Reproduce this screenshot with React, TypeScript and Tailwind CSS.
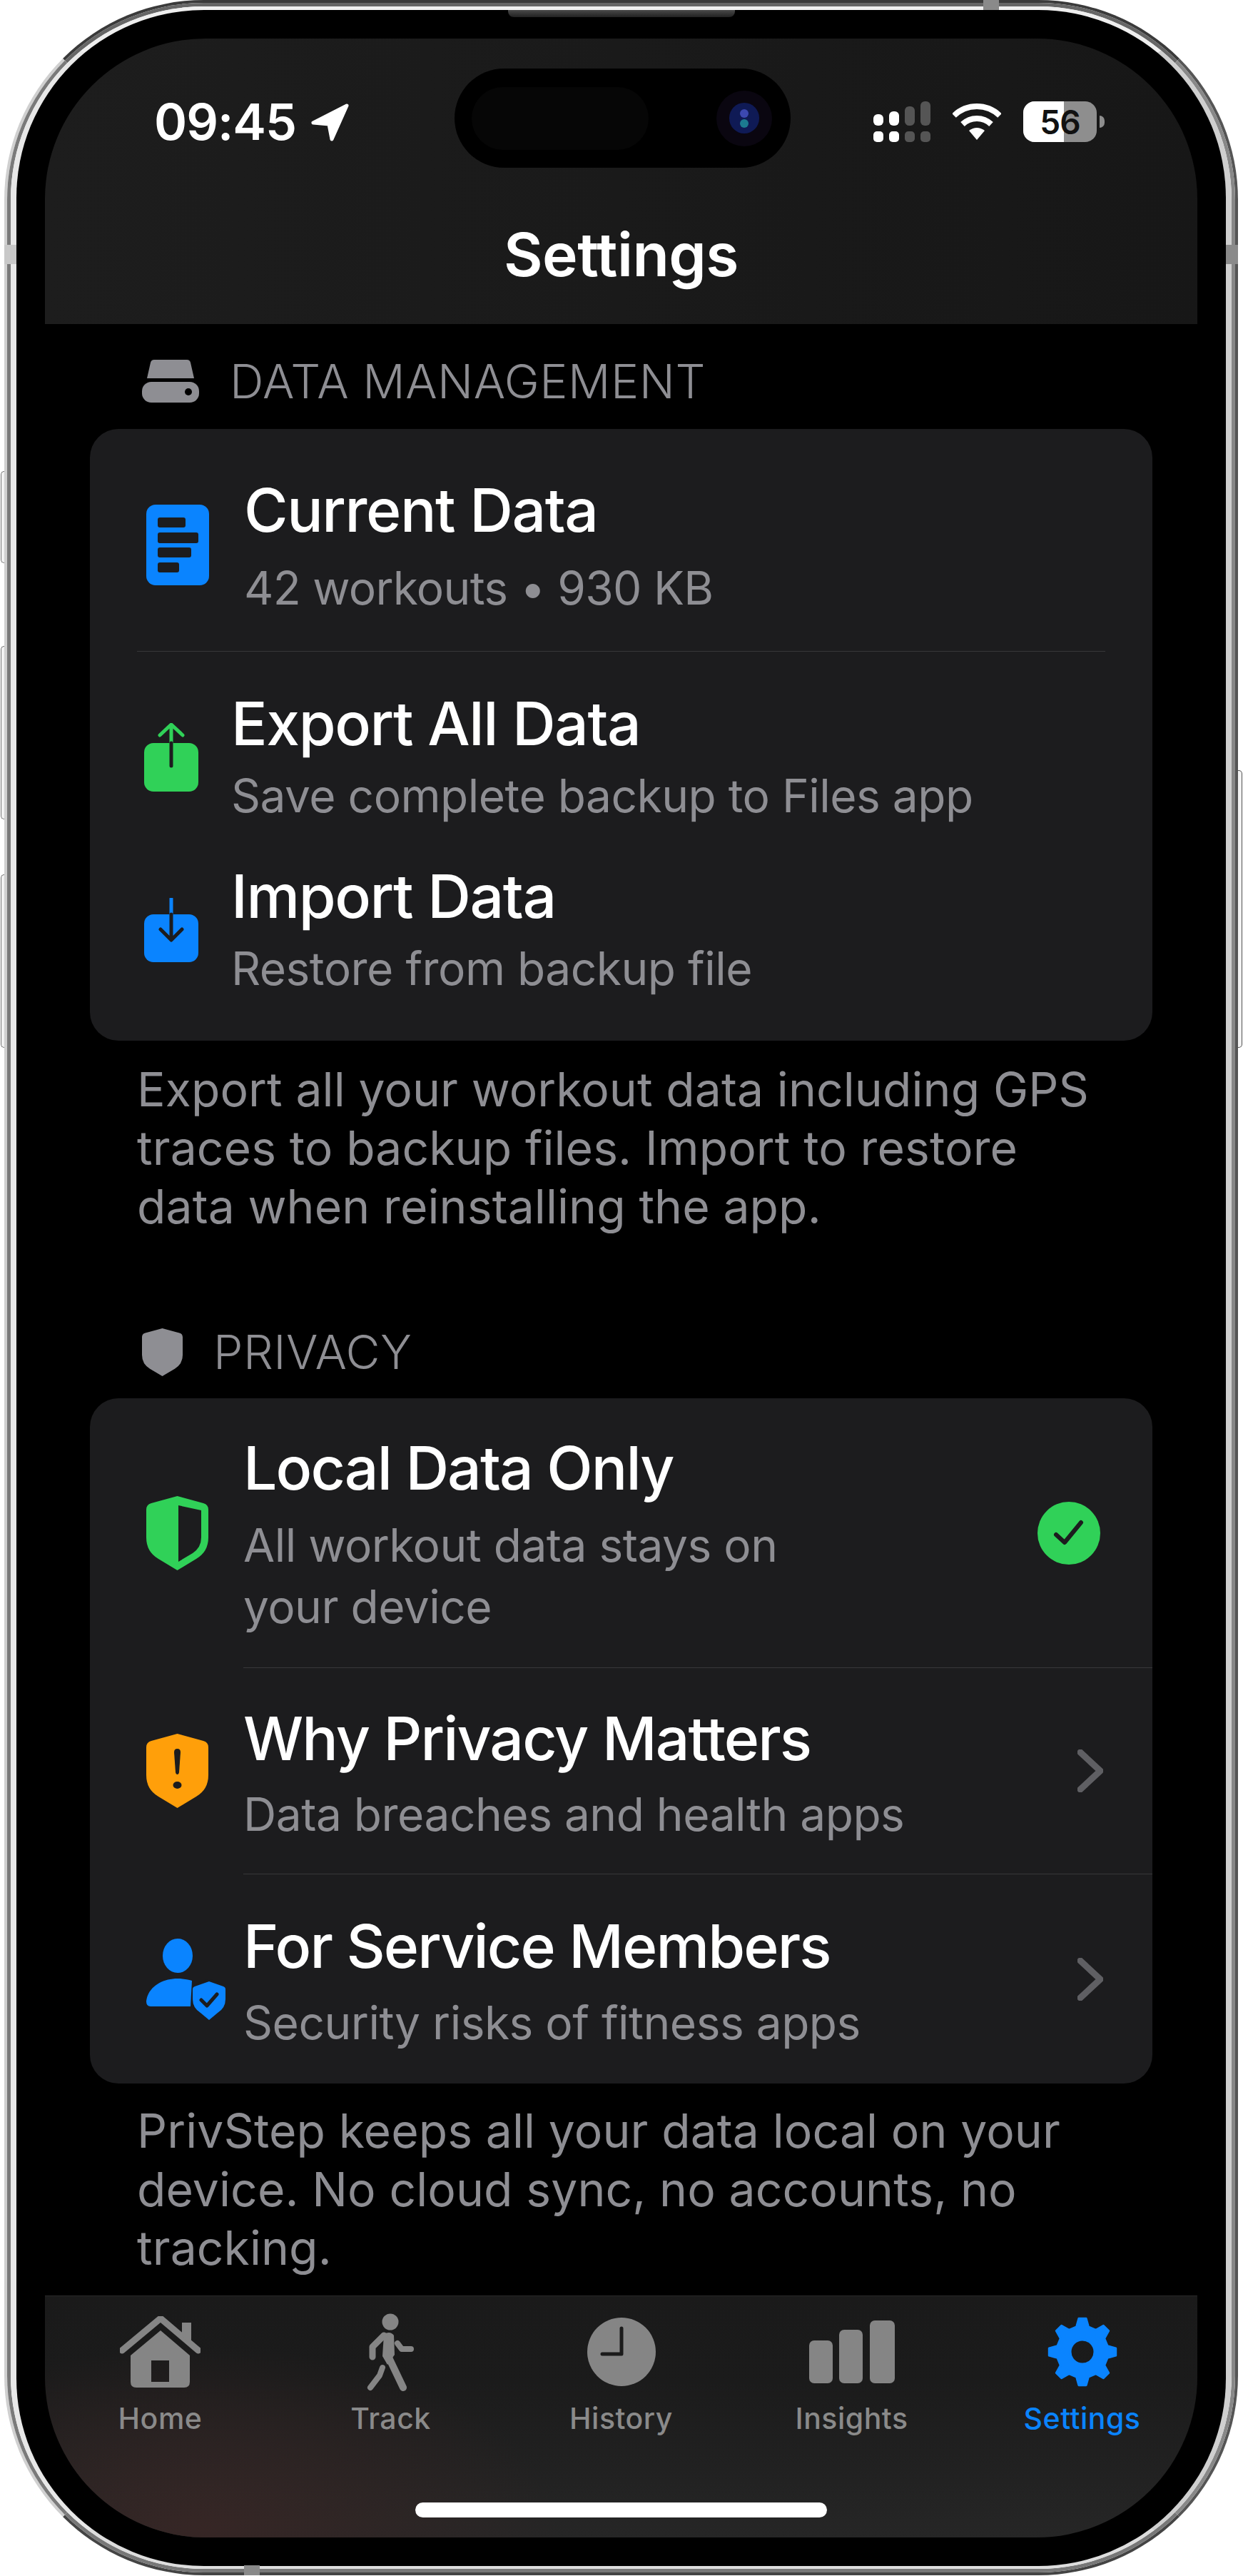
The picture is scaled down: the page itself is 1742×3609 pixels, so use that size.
import type { ReactNode } from "react";

const SHIELD = "M43.5 0 L80 10 Q87 12 87 19 V58 Q87 78 70 88 L43.5 104 L17 88 Q0 78 0 58 V19 Q0 12 7 10Z";

function gearPath() {
  const cx = 50;
  const cy = 50;
  const teeth = 8;
  const pts: string[] = [];
  for (let i = 0; i < teeth; i++) {
    const a = (i / teeth) * Math.PI * 2 - Math.PI / 2;
    const step = (Math.PI * 2) / teeth;
    const add = (r: number, o: number) => {
      pts.push(`${(cx + r * Math.cos(a + o)).toFixed(2)} ${(cy + r * Math.sin(a + o)).toFixed(2)}`);
    };
    add(36, -step * 0.3);
    add(47, -step * 0.14);
    add(47, step * 0.14);
    add(36, step * 0.3);
  }
  const hole = "M50 33 A17 17 0 1 0 50 67 A17 17 0 1 0 50 33Z";
  return "M" + pts.join(" L") + "Z " + hole;
}

function DriveIcon() {
  return (
    <svg width="80" height="60" viewBox="0 0 80 60" className="shrink-0">
      <path d="M17 0 H63 Q67 0 68 4 L73 26 H7 L12 4 Q13 0 17 0Z" fill="#8e8e93" />
      <rect x="0" y="31" width="80" height="29" rx="13" fill="#8e8e93" />
      <circle cx="65" cy="45" r="5" fill="#000" />
    </svg>
  );
}

function DocIcon() {
  return (
    <svg width="88" height="113" viewBox="0 0 88 113" className="-mt-[4px] shrink-0">
      <rect width="88" height="113" rx="13" fill="#0a84ff" />
      <rect x="16" y="18" width="39" height="14" rx="3" fill="#1c1c1e" />
      <rect x="16" y="39" width="57" height="15" rx="3" fill="#1c1c1e" />
      <rect x="16" y="60" width="47" height="14" rx="3" fill="#1c1c1e" />
      <rect x="16" y="81" width="30" height="14" rx="3" fill="#1c1c1e" />
    </svg>
  );
}

function ExportIcon() {
  return (
    <svg width="76" height="96" viewBox="0 0 76 96" className="shrink-0">
      <rect y="28" width="76" height="68" rx="13" fill="#30d158" />
      <path d="M38 28 V3 M22 17 L38 2 L54 17" fill="none" stroke="#30d158" strokeWidth="5" strokeLinecap="round" strokeLinejoin="round" />
      <path d="M38 28 V60" stroke="#1c1c1e" strokeWidth="5" strokeLinecap="round" />
    </svg>
  );
}

function ImportIcon() {
  return (
    <svg width="76" height="90" viewBox="0 0 76 90" className="shrink-0">
      <rect y="23" width="76" height="67" rx="13" fill="#0a84ff" />
      <path d="M38 1 V23" stroke="#0a84ff" strokeWidth="5" strokeLinecap="round" />
      <path d="M38 23 V58 M23 44 L38 59 L53 44" fill="none" stroke="#1c1c1e" strokeWidth="5" strokeLinecap="round" strokeLinejoin="round" />
    </svg>
  );
}

function GreenShield() {
  return (
    <svg width="87" height="104" viewBox="0 0 87 104">
      <path d={SHIELD} fill="#30d158" />
      <path d="M45 13 L77 20 V58 Q77 72 65 80 L45 92Z" fill="#1c1c1e" />
    </svg>
  );
}

function OrangeShield() {
  return (
    <svg width="87" height="104" viewBox="0 0 87 104">
      <path d={SHIELD} fill="#ff9f0a" />
      <path d="M39 26 Q39 21 43.5 21 Q48 21 48 26 L46 54 Q45.5 57 43.5 57 Q41.5 57 41 54Z" fill="#1c1c1e" />
      <ellipse cx="43.5" cy="72" rx="6" ry="5" fill="#1c1c1e" />
    </svg>
  );
}

function PersonBadge() {
  return (
    <svg width="112" height="114" viewBox="0 0 112 114" className="overflow-visible">
      <ellipse cx="44" cy="24" rx="21" ry="24" fill="#0a84ff" />
      <path d="M0 88 C2 68 22 56 44 56 C50 56 58 57 64 59 L62 95 H6 Q0 95 0 88Z" fill="#0a84ff" />
      <path d="M88 56 L112 65 V85 Q112 99 100 106 L88 118 L76 106 Q64 99 64 85 V65Z" fill="#1c1c1e" />
      <path d="M88 60 L108 67 Q111 68 111 71 V85 Q111 97 100 104 L88 114 L76 104 Q65 97 65 85 V71 Q65 68 68 67Z" fill="#0a84ff" />
      <path d="M77 86 L85 94 L99 78" fill="none" stroke="#1c1c1e" strokeWidth="5" strokeLinecap="round" strokeLinejoin="round" />
    </svg>
  );
}

function PrivacyShield() {
  return (
    <svg width="57" height="67" viewBox="0 0 87 104" preserveAspectRatio="none" className="shrink-0">
      <path d={SHIELD} fill="#8e8e93" />
    </svg>
  );
}

function HomeIcon() {
  return (
    <svg width="113" height="100" viewBox="0 0 113 100">
      <path d="M3 48 L57 3 L110 48" fill="none" stroke="#858585" strokeWidth="9" strokeLinecap="round" strokeLinejoin="round" />
      <path d="M87 9 H100 V40 L87 28Z" fill="#858585" />
      <path
        fillRule="evenodd"
        d="M57 20 L98 55 V92 Q98 100 90 100 H23 Q15 100 15 92 V55Z M44 62 V92 H69 V62Z"
        fill="#858585"
      />
    </svg>
  );
}

function WalkIcon() {
  return (
    <svg width="67" height="109" viewBox="0 0 67 109">
      <circle cx="33" cy="12" r="11.5" fill="#858585" />
      <path d="M24 29 Q33 24 38 31 L39 58 L29 72 L22 60Z" fill="#858585" />
      <g fill="none" stroke="#858585" strokeLinecap="round" strokeLinejoin="round">
        <path d="M24 31 L8 47 V61" strokeWidth="9" />
        <path d="M43 42 L49 50 H62" strokeWidth="8" />
        <path d="M31 62 L51 104" strokeWidth="10" />
        <path d="M22 76 L18 87 L5 104" strokeWidth="8" />
      </g>
    </svg>
  );
}

function ClockIcon() {
  return (
    <svg width="96" height="96" viewBox="0 0 96 96">
      <circle cx="48" cy="48" r="48" fill="#858585" />
      <path d="M48 15 V51 H21" fill="none" stroke="#1b1b1b" strokeWidth="5" strokeLinecap="round" strokeLinejoin="round" />
    </svg>
  );
}

function BarsIcon() {
  return (
    <svg width="120" height="88" viewBox="0 0 120 88">
      <rect x="0" y="28" width="33" height="60" rx="7" fill="#858585" />
      <rect x="42" y="13" width="33" height="75" rx="7" fill="#858585" />
      <rect x="85" y="0" width="35" height="88" rx="7" fill="#858585" />
    </svg>
  );
}

function GearIcon() {
  return (
    <svg width="100" height="100" viewBox="0 0 100 100">
      <path d={gearPath()} fill="#0a84ff" fillRule="evenodd" stroke="#0a84ff" strokeWidth="3" strokeLinejoin="round" />
    </svg>
  );
}

function Chevron() {
  return (
    <svg width="36" height="60" viewBox="0 0 36 60" className="shrink-0">
      <path d="M4 4 L32 30 L4 56" fill="none" stroke="#5f5f63" strokeWidth="9" strokeLinecap="round" strokeLinejoin="round" />
    </svg>
  );
}

function CheckBadge() {
  return (
    <svg width="88" height="88" viewBox="0 0 88 88" className="shrink-0">
      <circle cx="44" cy="44" r="44" fill="#30d158" />
      <path d="M26 46 L38 57 L61 29" fill="none" stroke="#1c1c1e" strokeWidth="6" strokeLinecap="round" strokeLinejoin="round" />
    </svg>
  );
}

function Signal() {
  const cols = [
    { x: 0, top: 18 },
    { x: 22, top: 14 },
    { x: 44, top: 7 },
    { x: 66, top: 0 },
  ];
  return (
    <svg width="80" height="57" viewBox="0 0 80 57">
      {cols.map((c, i) => (
        <g key={c.x} fill={i < 2 ? "#fff" : "#555"}>
          <rect x={c.x} y={c.top} width="14" height={34 - c.top} rx="6" />
          <rect x={c.x} y="42" width="14" height="15" rx="5" />
        </g>
      ))}
    </svg>
  );
}

function Wifi() {
  return (
    <svg width="68" height="52" viewBox="0 0 68 52" className="mt-[2px]">
      <g fill="none" stroke="#fff" strokeWidth="8">
        <path d="M2 18 A46 46 0 0 1 66 18" />
        <path d="M14 30 A29 29 0 0 1 54 30" />
      </g>
      <path d="M34 52 L23 39 Q34 31 45 39Z" fill="#fff" />
    </svg>
  );
}

function Battery() {
  return (
    <div className="flex items-center gap-[4px]">
      <div className="relative flex h-[57px] w-[103px] items-center justify-center overflow-hidden rounded-[16px] bg-[#8e8e8e]">
        <div className="absolute inset-y-0 left-0 w-[57px] bg-white" />
        <span className="relative text-[46px] leading-none font-semibold tracking-[-1px] text-[#111]">56</span>
      </div>
      <div className="h-[17px] w-[7px] rounded-r-full bg-[#8e8e8e]" />
    </div>
  );
}

function Island() {
  return (
    <div className="absolute top-[42px] left-[574px] flex h-[139px] w-[471px] items-center justify-between rounded-[70px] bg-black pr-[26px] pl-[24px]">
      <div className="h-[88px] w-[248px] rounded-[44px] bg-[#060606]" />
      <div className="flex h-[78px] w-[78px] items-center justify-center rounded-full bg-[#0a0610]">
        <div className="flex h-[43px] w-[42px] flex-col items-center justify-center gap-[2px] rounded-full bg-[#0f1a55]">
          <div className="h-[12px] w-[12px] rounded-full bg-[#3c48b0]" />
          <div className="h-[12px] w-[12px] rounded-full bg-[#1c7a90]" />
        </div>
      </div>
    </div>
  );
}

function StatusBar() {
  return (
    <div className="flex items-start justify-between pr-[130px] pl-[153px]">
      <div className="flex items-start gap-[21px]">
        <span className="text-[70px] leading-[57px] font-semibold tracking-[-1px] text-white">09:45</span>
        <svg width="53" height="53" viewBox="0 0 53 53" className="mt-[3px]">
          <path d="M50 3 L3 27 L25 29 L29 50Z" fill="#fff" stroke="#fff" strokeWidth="5" strokeLinejoin="round" />
        </svg>
      </div>
      <div className="flex items-start gap-[31px]">
        <Signal />
        <Wifi />
        <Battery />
      </div>
    </div>
  );
}

function SectionHeader({ icon, title, gap }: { icon: ReactNode; title: string; gap: string }) {
  return (
    <div className={`flex h-[76px] items-center pl-[136px] ${gap}`}>
      {icon}
      <span className="text-[66px] leading-[76px] font-light tracking-[0.5px] text-[#8e8e93]">{title}</span>
    </div>
  );
}

function Title({ children }: { children: ReactNode }) {
  return <div className="text-[84px] leading-[96px] font-[450] tracking-[-1.4px] text-white">{children}</div>;
}

function RowTitle({ children }: { children: ReactNode }) {
  return <div className="text-[84px] leading-[96px] font-[450] tracking-[-1.9px] text-white">{children}</div>;
}

function Sub({ children, gap }: { children: ReactNode; gap: string }) {
  return <div className={`text-[64px] leading-[86px] font-normal tracking-[-0.5px] text-[#8e8e93] ${gap}`}>{children}</div>;
}

function Note({ children }: { children: ReactNode }) {
  return <p className="pr-[150px] pl-[129px] text-[66px] leading-[82px] font-normal tracking-[0.1px] text-[#8e8e93]">{children}</p>;
}

function PrivacyRow({ icon, title, sub, right, textClass, subGap }: { icon: ReactNode; title: string; sub: ReactNode; right: ReactNode; textClass: string; subGap: string }) {
  return (
    <div className="flex items-center pl-[79px]">
      <div className="w-[87px] shrink-0">{icon}</div>
      <div className={`ml-[49px] flex-1 ${textClass}`}>
        <RowTitle>{title}</RowTitle>
        <Sub gap={subGap}>{sub}</Sub>
      </div>
      {right}
    </div>
  );
}

function Tab({ icon, label, active }: { icon: ReactNode; label: string; active?: boolean }) {
  return (
    <div className="flex flex-col items-center">
      <div className="flex h-[110px] items-center justify-center">{icon}</div>
      <span className={`mt-[13px] text-[41px] leading-[50px] font-medium tracking-[0.5px] ${active ? "text-[#0a84ff]" : "text-[#8a8a8a]"}`}>{label}</span>
    </div>
  );
}

export default function App() {
  return (
    <div className="relative h-[3609px] w-[1742px] overflow-hidden bg-white pl-[6px] font-[Inter,sans-serif]">
      {/* side buttons */}
      <div className="absolute top-[660px] left-[1px] h-[129px] w-[6px] rounded-l-[5px] border border-r-0 border-[#777] bg-[#f2f2f2]" />
      <div className="absolute top-[905px] left-[1px] h-[243px] w-[6px] rounded-l-[5px] border border-r-0 border-[#777] bg-[#f2f2f2]" />
      <div className="absolute top-[1225px] left-[1px] h-[243px] w-[6px] rounded-l-[5px] border border-r-0 border-[#777] bg-[#f2f2f2]" />
      <div className="absolute top-[1079px] left-[1735px] h-[389px] w-[6px] rounded-r-[5px] border border-l-0 border-[#555] bg-[#f2f2f2]" />

      {/* phone frame */}
      <div className="relative h-[3608px] w-[1729px] rounded-[280px] border-[4px] border-t-[#3a3a3a] border-r-[#555] border-b-[#444] border-l-[#d0d0d0]">
        <div className="h-full w-full rounded-[276px] border-y-[5px] border-x-[5px] border-t-[#666] border-r-[#888] border-b-[#777] border-l-[#7a7a7a]">
          <div className="h-full w-full rounded-[271px] border-x-[8px] border-t-[5px] border-b-[4px] border-t-[#efefef] border-r-[#cfcfcf] border-b-[#ddd] border-l-[#e8e8e8]">
            <div className="relative h-full w-full rounded-[263px] bg-black p-[40px]">
              <div className="absolute top-0 left-[689px] h-[10px] w-[318px] rounded-b-[8px] bg-linear-to-b from-[#4a4a4a] to-[#222]" />

              <div className="relative flex h-full w-full flex-col overflow-hidden rounded-[225px] bg-black">
                <header className="h-[400px] shrink-0 bg-linear-to-r from-[#1d1d1d] to-[#171717] pt-[88px]">
                  <StatusBar />
                  <h1 className="mt-[108px] text-center text-[84px] leading-[100px] font-semibold tracking-[-0.5px] text-white">Settings</h1>
                </header>
                <Island />

                <main className="min-h-0 flex-1 overflow-hidden pt-[42px]">
                  <SectionHeader icon={<DriveIcon />} title="DATA MANAGEMENT" gap="gap-[43px]" />
                  <section className="mx-[63px] mt-[29px] rounded-[40px] bg-[#1c1c1e] pt-[66px] pb-[61px]">
                    <div className="flex items-center pl-[79px]">
                      <DocIcon />
                      <div className="ml-[49px]">
                        <Title>Current Data</Title>
                        <div className="mt-[21px] text-[64px] leading-[80px] tracking-[-0.7px] text-[#8e8e93]">42 workouts • 930 KB</div>
                      </div>
                    </div>
                    <div className="mx-[66px] mt-[48px] h-px bg-[#38383a]" />
                    <div className="mt-[53px] flex items-center pl-[76px]">
                      <ExportIcon />
                      <div className="ml-[46px]">
                        <Title>Export All Data</Title>
                        <div className="mt-[13px] text-[64px] leading-[80px] tracking-[-0.5px] text-[#8e8e93]">Save complete backup to Files app</div>
                      </div>
                    </div>
                    <div className="mt-[53px] flex items-center pl-[76px]">
                      <ImportIcon />
                      <div className="ml-[46px]">
                        <Title>Import Data</Title>
                        <div className="mt-[13px] text-[64px] leading-[80px] tracking-[-0.5px] text-[#8e8e93]">Restore from backup file</div>
                      </div>
                    </div>
                  </section>
                  <div className="mt-[27px]">
                    <Note>Export all your workout data including GPS traces to backup files. Import to restore data when reinstalling the app.</Note>
                  </div>

                  <div className="mt-[125px]">
                    <SectionHeader icon={<PrivacyShield />} title="PRIVACY" gap="gap-[43px]" />
                  </div>
                  <section className="mx-[63px] mt-[27px] rounded-[40px] bg-[#1c1c1e]">
                    <PrivacyRow
                      icon={<GreenShield />}
                      title="Local Data Only"
                      sub={<>All workout data stays on<br />your device</>}
                      right={<div className="pr-[73px]"><CheckBadge /></div>}
                      textClass="pt-[50px] pb-[42px]"
                      subGap="mt-[17px]"
                    />
                    <div className="ml-[215px] h-px bg-[#38383a]" />
                    <PrivacyRow
                      icon={<OrangeShield />}
                      title="Why Privacy Matters"
                      sub="Data breaches and health apps"
                      right={<div className="pr-[69px]"><Chevron /></div>}
                      textClass="pt-[51px] pb-[40px]"
                      subGap="mt-[15px]"
                    />
                    <div className="ml-[215px] h-px bg-[#38383a]" />
                    <PrivacyRow
                      icon={<PersonBadge />}
                      title="For Service Members"
                      sub="Security risks of fitness apps"
                      right={<div className="pr-[69px]"><Chevron /></div>}
                      textClass="pt-[53px] pb-[42px]"
                      subGap="mt-[16px]"
                    />
                  </section>
                  <div className="mt-[25px]">
                    <Note>PrivStep keeps all your data local on your device. No cloud sync, no accounts, no tracking.</Note>
                  </div>
                </main>

                <nav className="relative h-[339px] shrink-0 border-t border-[#2a2a2a] bg-[radial-gradient(ellipse_500px_260px_at_220px_330px,#362625_0%,transparent_100%),linear-gradient(to_bottom,#1a1a1a,#1b1b1b_35%,#262626)] pt-[23px]">
                  <div className="grid grid-cols-5">
                    <Tab icon={<HomeIcon />} label="Home" />
                    <Tab icon={<WalkIcon />} label="Track" />
                    <Tab icon={<ClockIcon />} label="History" />
                    <Tab icon={<BarsIcon />} label="Insights" />
                    <Tab icon={<GearIcon />} label="Settings" active />
                  </div>
                  <div className="absolute bottom-[28px] left-[519px] h-[21px] w-[577px] rounded-full bg-white" />
                </nav>
              </div>

              {/* antenna bands */}
              <div className="absolute top-[329px] -left-[17px] h-[27px] w-[17px] bg-[#c8c8c8]" />
              <div className="absolute top-[329px] -right-[17px] h-[27px] w-[17px] bg-[#8a8a8a]" />
            </div>
          </div>
        </div>
        <div className="absolute top-[-4px] left-[1368px] h-[14px] w-[22px] bg-[#8a8a8a]" />
        <div className="absolute bottom-[-4px] left-[332px] h-[14px] w-[22px] bg-[#8a8a8a]" />
      </div>
    </div>
  );
}
